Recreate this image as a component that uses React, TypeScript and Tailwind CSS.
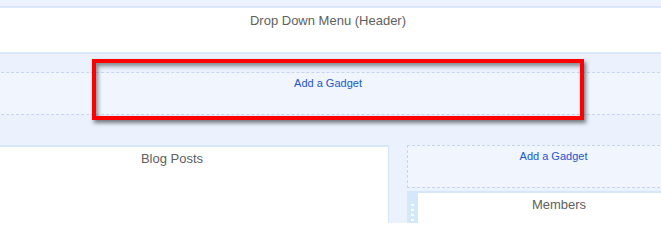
import React from "react";

// Blogger-style layout editor, cropped: header, gadget slot, blog + sidebar
const AddGadget = ({ className = "" }: { className?: string }) => (
  <div
    className={`border border-dashed border-[#c6d4f3] bg-[#f0f5fe] text-center text-[11px] leading-[14px] ${className}`}
  >
    <a href="#" className="text-[#2255cc] hover:underline">
      Add a Gadget
    </a>
  </div>
);

export default function App() {
  return (
    <div
      className="relative w-[661px] h-[223px] overflow-hidden bg-[#ebf2fd]"
      style={{ fontFamily: '"Liberation Sans", Arial, sans-serif' }}
    >
      <div className="ml-[-44px] w-[744px] pt-[6px]">
        {/* header */}
        <div className="h-[48px] border-y-2 border-[#dbe7f9] bg-white pt-[5px] text-center text-[13px] leading-4 text-[#606060]">
          Drop Down Menu (Header)
        </div>

        {/* full width gadget slot */}
        <AddGadget className="mt-[18px] h-[43px] pt-[3px] border-x-0" />

        {/* main row */}
        <div className="mt-[30px] flex gap-[18px]">
          <div className="w-[433px] h-[90px] border-t-2 border-r border-[#d6e6f8] bg-white pt-[4px] text-center text-[13px] leading-4 text-[#606060]">
            Blog Posts
          </div>

          <div className="flex w-[293px] flex-col">
            <AddGadget className="h-[43px] pt-[3px]" />
            <div className="mt-[3px] flex h-[60px] border-t-2 border-[#d6e6f8]">
              <div className="flex w-[11px] flex-col items-center gap-[3px] bg-[#d4e8fc] pt-[11px]">
                <span className="h-[2px] w-[3px] bg-white" />
                <span className="h-[2px] w-[3px] bg-white" />
                <span className="h-[2px] w-[3px] bg-white" />
                <span className="h-[2px] w-[3px] bg-white" />
              </div>
              <div className="flex-1 bg-white pt-[4px] text-center text-[13px] leading-4 text-[#606060]">
                Members
              </div>
            </div>
          </div>
        </div>
      </div>

      {/* red highlight annotation */}
      <div
        className="absolute left-[92px] top-[59px] h-[61px] w-[492px] border-4 border-[#ff0000]"
        style={{ boxShadow: "2px 3px 4px rgba(0,0,0,0.5), inset 2px 3px 4px rgba(0,0,0,0.45)" }}
      />
    </div>
  );
}
